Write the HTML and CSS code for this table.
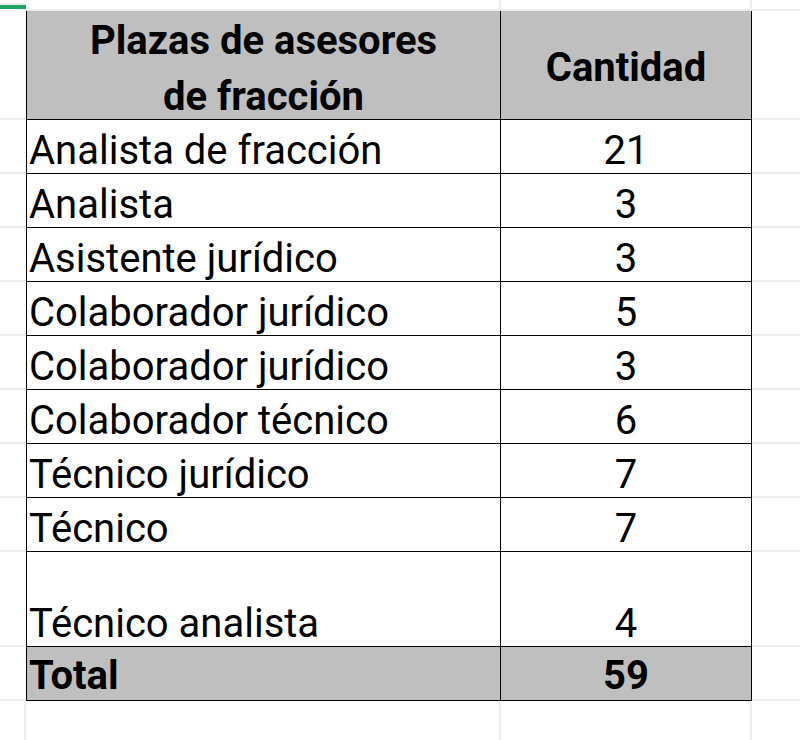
FILE: index.html
```html
<!DOCTYPE html>
<html lang="es">
<head>
<meta charset="utf-8">
<title>Plazas de asesores de fracción</title>
<link rel="stylesheet" href="styles.css">
</head>
<body>
<div class="sheet">
  <!-- top strip -->
  <div class="g gl top-corner"></div>
  <div class="g gl top"></div>
  <div class="g gl top"></div>
  <div class="g gl top last"></div>

  <!-- header -->
  <div class="g gl side"></div>
  <div class="c hd first"><div class="hd-text">Plazas de asesores<br>de fracción</div></div>
  <div class="c hd num"><div class="hd-cant">Cantidad</div></div>
  <div class="g gl edge"></div>

  <div class="g gl side"></div><div class="c first">Analista de fracción</div><div class="c num">21</div><div class="g gl edge"></div>
  <div class="g gl side"></div><div class="c first">Analista</div><div class="c num">3</div><div class="g gl edge"></div>
  <div class="g gl side"></div><div class="c first">Asistente jurídico</div><div class="c num">3</div><div class="g gl edge"></div>
  <div class="g gl side"></div><div class="c first">Colaborador jurídico</div><div class="c num">5</div><div class="g gl edge"></div>
  <div class="g gl side"></div><div class="c first">Colaborador jurídico</div><div class="c num">3</div><div class="g gl edge"></div>
  <div class="g gl side"></div><div class="c first">Colaborador técnico</div><div class="c num">6</div><div class="g gl edge"></div>
  <div class="g gl side"></div><div class="c first">Técnico jurídico</div><div class="c num">7</div><div class="g gl edge"></div>
  <div class="g gl side"></div><div class="c first">Técnico</div><div class="c num">7</div><div class="g gl edge"></div>
  <div class="g gl side"></div><div class="c first">Técnico analista</div><div class="c num">4</div><div class="g gl edge"></div>

  <div class="g gl side"></div><div class="c first total">Total</div><div class="c num total">59</div><div class="g gl edge"></div>

  <!-- bottom strip -->
  <div class="g gl bottom"></div>
  <div class="g gl bottom"></div>
  <div class="g gl bottom"></div>
  <div class="g bottom last"></div>
</div>
</body>
</html>
```

FILE: styles.css
```css
html, body {
  margin: 0;
  padding: 0;
  background: #ffffff;
}

.sheet {
  width: 800px;
  height: 740px;
  overflow: hidden;
  display: grid;
  grid-template-columns: 26px 475px 251px 48px;
  grid-template-rows: 11px 109px repeat(8, 54px) 95px 54px 39px;
  font-family: Roboto, "Noto Sans", "Liberation Sans", sans-serif;
  color: #000000;
}

.g {
  box-sizing: border-box;
}

.gl {
  border-right: 2px solid #ececec;
  border-bottom: 2px solid #ececec;
}

.top-corner {
  background: linear-gradient(to bottom,
    #ffffff 0, #ffffff 3px,
    #ececec 3px, #ececec 5px,
    #21a366 5px, #21a366 9px,
    #ffffff 9px);
  border-right: none;
  border-bottom: none;
}

.top.last,
.edge {
  border-right: none;
}

.bottom {
  border-bottom: none;
}

.side {
  border-right: none;
}

.c {
  box-sizing: border-box;
  display: flex;
  align-items: flex-end;
  border-right: 1px solid #000000;
  border-bottom: 1px solid #000000;
  font-size: 40px;
  line-height: 44px;
  white-space: nowrap;
}

.c.first {
  border-left: 1px solid #000000;
  padding-left: 2px;
}

.c.num {
  justify-content: center;
}

.hd {
  background: #bfbfbf;
  font-weight: 700;
  align-items: flex-start;
  justify-content: center;
}

.hd.first {
  padding-left: 0;
}

.hd-text {
  text-align: center;
  line-height: 56px;
  padding-top: 2px;
}

.hd-cant {
  padding-top: 35px;
}

.total {
  background: #bfbfbf;
  font-weight: 700;
  padding-bottom: 2px;
}
```
